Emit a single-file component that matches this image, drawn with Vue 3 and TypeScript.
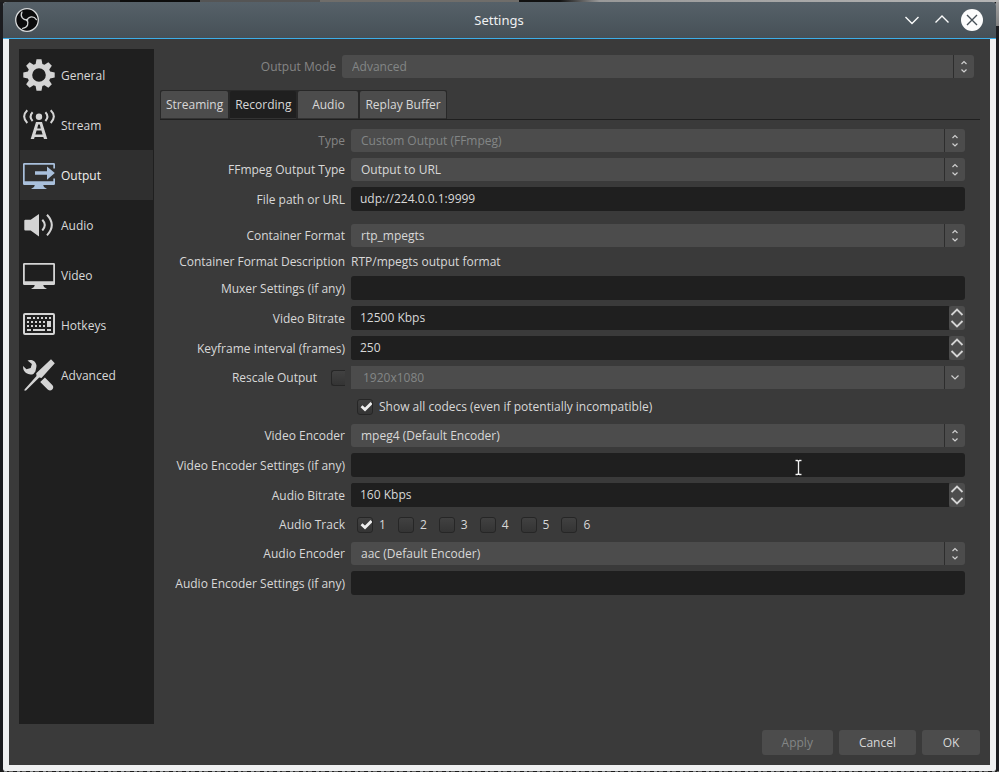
<script setup lang="ts">
import { ref, reactive } from 'vue'

type FieldKind = 'select' | 'text' | 'spin' | 'note' | 'combo' | 'codecs' | 'tracks'

interface Field {
  id: string
  label: string
  kind: FieldKind
  value: string
  disabled?: boolean
  roomy?: boolean
}

const sections = ['General', 'Stream', 'Output', 'Audio', 'Video', 'Hotkeys', 'Advanced']
const activeSection = ref('Output')

const tabs = ['Streaming', 'Recording', 'Audio', 'Replay Buffer']
const activeTab = ref('Recording')

const outputMode = ref('Advanced')
const rescale = ref(false)
const showAllCodecs = ref(true)
const tracks = reactive([true, false, false, false, false, false])

const fields = reactive<Field[]>([
  { id: 'type', label: 'Type', kind: 'select', value: 'Custom Output (FFmpeg)', disabled: true },
  { id: 'output-type', label: 'FFmpeg Output Type', kind: 'select', value: 'Output to URL' },
  { id: 'url', label: 'File path or URL', kind: 'text', value: 'udp://224.0.0.1:9999', roomy: true },
  { id: 'container', label: 'Container Format', kind: 'select', value: 'rtp_mpegts' },
  { id: 'container-desc', label: 'Container Format Description', kind: 'note', value: 'RTP/mpegts output format' },
  { id: 'muxer', label: 'Muxer Settings (if any)', kind: 'text', value: '' },
  { id: 'video-bitrate', label: 'Video Bitrate', kind: 'spin', value: '12500 Kbps' },
  { id: 'keyframe', label: 'Keyframe interval (frames)', kind: 'spin', value: '250' },
  { id: 'rescale', label: 'Rescale Output', kind: 'combo', value: '1920x1080', disabled: true },
  { id: 'codecs', label: '', kind: 'codecs', value: '' },
  { id: 'video-encoder', label: 'Video Encoder', kind: 'select', value: 'mpeg4 (Default Encoder)' },
  { id: 'video-settings', label: 'Video Encoder Settings (if any)', kind: 'text', value: '' },
  { id: 'audio-bitrate', label: 'Audio Bitrate', kind: 'spin', value: '160 Kbps' },
  { id: 'track', label: 'Audio Track', kind: 'tracks', value: '' },
  { id: 'audio-encoder', label: 'Audio Encoder', kind: 'select', value: 'aac (Default Encoder)' },
  { id: 'audio-settings', label: 'Audio Encoder Settings (if any)', kind: 'text', value: '' }
])

function step(field: Field, delta: number) {
  const amount = parseInt(field.value, 10) + delta
  field.value = field.value.replace(/^\d+/, String(Math.max(0, amount)))
}

// Eight-toothed gear outline, centred in a 32-unit box.
function gearPath(): string {
  const points: string[] = []
  const corners: [number, number][] = [[11.6, -17], [15.9, -9], [15.9, 9], [11.6, 17]]
  for (let tooth = 0; tooth < 8; tooth++) {
    for (const [radius, offset] of corners) {
      const angle = ((tooth * 45 + offset) * Math.PI) / 180
      points.push(`${(16 + radius * Math.cos(angle)).toFixed(2)} ${(16 + radius * Math.sin(angle)).toFixed(2)}`)
    }
  }
  return `M${points.join('L')}Z M16 9.2a6.8 6.8 0 1 0 0 13.6a6.8 6.8 0 1 0 0-13.6Z`
}
const gear = gearPath()
</script>

<template>
  <div class="desktop">
    <div class="window">
      <header class="titlebar">
        <svg class="logo" viewBox="-12 -12 24 24" aria-hidden="true">
          <circle r="11.3" fill="#0b0b0c" stroke="#d8dadb" stroke-width="1.3" />
          <g fill="none" stroke="#d0d2d3" stroke-width="1.3" stroke-linecap="round">
            <path d="M-.3 .6C1.5-3.6 6.5-4.6 9.4-.4" />
            <path d="M-.3 .6C1.5-3.6 6.5-4.6 9.4-.4" transform="rotate(120)" />
            <path d="M-.3 .6C1.5-3.6 6.5-4.6 9.4-.4" transform="rotate(240)" />
          </g>
        </svg>
        <h1>Settings</h1>
        <div class="window-buttons">
          <button type="button" aria-label="Minimize">
            <svg viewBox="0 0 22 22"><path d="M4.500 8l6.500 6.500L17.500 8" /></svg>
          </button>
          <button type="button" aria-label="Maximize">
            <svg viewBox="0 0 22 22"><path d="M4.500 13.500L11 7l6.500 6.500" /></svg>
          </button>
          <button type="button" aria-label="Close">
            <svg viewBox="0 0 22 22">
              <circle cx="11" cy="11" r="11" class="disc" />
              <path d="M6 6l10 10M16 6L6 16" class="cross" />
            </svg>
          </button>
        </div>
      </header>

      <div class="content">
        <div class="columns">
          <nav class="sidebar">
            <button
              v-for="name in sections"
              :key="name"
              type="button"
              :class="{ active: name === activeSection }"
              @click="activeSection = name"
            >
              <svg viewBox="0 0 32 32" aria-hidden="true">
                <path v-if="name === 'General'" :d="gear" fill-rule="evenodd" />
                <template v-else-if="name === 'Stream'">
                  <circle cx="16" cy="7.700" r="3.200" />
                  <g class="line">
                    <path d="M4.300 1.300Q-2 7.500 4.300 14M27.700 1.300Q34 7.500 27.700 14" />
                    <path d="M9.600 3.300Q5.600 7.600 9.600 12M22.400 3.300Q26.400 7.600 22.400 12" />
                  </g>
                  <path
                    fill-rule="evenodd"
                    d="M13 13h6l5.300 17h-3.300l-.7-2h-8.600l-.7 2H7.700ZM15.200 15.500l-1 4h3.600l-1-4ZM13.600 21.500l-1.200 4h7.200l-1.200-4Z"
                  />
                </template>
                <template v-else-if="name === 'Output'">
                  <path d="M1.300 4h29.400q1.300 0 1.300 1.300V9.500h-1.700V5.700H1.700v16.600h28.600V19.500H32v5.200q0 1.300-1.300 1.300H1.300Q0 26 0 24.700V5.300Q0 4 1.300 4Z" />
                  <path d="M12 12.200h12V7.600l7.800 6.500-7.800 6.600v-5H12ZM11.800 26h8.400l.8 2 3 1.900H8l3-1.900Z" />
                </template>
                <template v-else-if="name === 'Audio'">
                  <path d="M2.300 10.700h5.400L16 5v22.400l-8.300-6H2.300q-1 0-1-1v-8.700q0-1 1-1Z" />
                  <path class="line" d="M19.300 10.700q5 5.400 0 10.800M24 5.800q9.600 10.300 0 20.600" />
                </template>
                <path
                  v-else-if="name === 'Video'"
                  fill-rule="evenodd"
                  d="M1.300 4h29.400q1.300 0 1.300 1.300v19.400q0 1.300-1.300 1.300H20.200l.8 2 3 1.900H8l3-1.900.8-2H1.300Q0 26 0 24.700V5.300Q0 4 1.300 4ZM1.800 5.800v16.400h28.400V5.800Z"
                />
                <template v-else-if="name === 'Hotkeys'">
                  <rect x="1" y="5" width="30" height="20" rx="1" class="frame" />
                  <path
                    d="M4 8h4v2H4ZM10 8h2v2h-2ZM14 8h2v2h-2ZM18 8h2v2h-2ZM22 8h2v2h-2ZM26 8h2v2h-2ZM4 12h2v2H4ZM8 12h2v2H8ZM12 12h2v2h-2ZM16 12h2v2h-2ZM20 12h2v2h-2ZM24 12h4v6h-4ZM4 16h2v2H4ZM8 16h2v2H8ZM12 16h2v2h-2ZM16 16h2v2h-2ZM20 16h2v2h-2ZM4 20h4v2H4ZM10 20h12v2H10ZM24 20h4v2h-4Z"
                  />
                </template>
                <template v-else>
                  <path d="M28 .3l3.800 3.900L18.500 19l-2.300-.5L3 31.500 1.500 31.800 1.500 30.500 13.500 17l-.3-2.700Z" />
                  <path d="M4.500 1.600C8-.2 12.700 1.800 13.400 6c.2 1.500 0 2.500-.4 3.700l-.6 2.900-2 2.300C6.500 16.600 1.600 14.300.3 10L0 6.900l3.500 3.300 4.200-1.300 1.200-3.800ZM17.200 23l4.700-4.400 7.600 7.600c2.400 3-1.500 7-4.500 4.600Z" />
                </template>
              </svg>
              <span>{{ name }}</span>
            </button>
          </nav>

          <main class="panel">
            <div class="mode-row">
              <label for="output-mode" class="muted">Output Mode</label>
              <div class="select">
                <select id="output-mode" v-model="outputMode" disabled>
                  <option>Advanced</option>
                </select>
                <svg class="arrows" viewBox="0 0 20 23" aria-hidden="true">
                  <path d="M7.500 9L10 6.500 12.500 9M7.500 14.500L10 17l2.500-2.500" />
                </svg>
              </div>
            </div>

            <div class="tab-line">
              <div class="tabs" role="tablist">
                <button
                  v-for="tab in tabs"
                  :key="tab"
                  type="button"
                  role="tab"
                  :aria-selected="tab === activeTab"
                  :class="{ active: tab === activeTab }"
                  @click="activeTab = tab"
                >
                  {{ tab }}
                </button>
              </div>
            </div>

            <form class="form" @submit.prevent>
              <div v-for="field in fields" :key="field.id" class="row" :class="[`row-${field.kind}`, { roomy: field.roomy }]">
                <label v-if="field.kind === 'combo'" class="caption toggle">
                  {{ field.label }}
                  <input v-model="rescale" type="checkbox" class="check narrow" />
                </label>
                <span v-else-if="field.kind === 'note' || field.kind === 'tracks'" class="caption">{{ field.label }}</span>
                <span v-else-if="field.kind === 'codecs'" class="caption"></span>
                <label v-else :for="field.id" class="caption" :class="{ muted: field.disabled }">{{ field.label }}</label>

                <div v-if="field.kind === 'select' || field.kind === 'combo'" class="select">
                  <select :id="field.id" v-model="field.value" :disabled="field.disabled" :aria-label="field.label">
                    <option>{{ field.value }}</option>
                  </select>
                  <svg class="arrows" viewBox="0 0 20 23" aria-hidden="true">
                    <path v-if="field.kind === 'combo'" d="M6.500 9.500L10 13l3.500-3.500" />
                    <path v-else d="M7.500 9L10 6.500 12.500 9M7.500 14.500L10 17l2.500-2.500" />
                  </svg>
                </div>

                <input v-else-if="field.kind === 'text'" :id="field.id" v-model="field.value" type="text" class="text" />

                <div v-else-if="field.kind === 'spin'" class="spinner">
                  <input :id="field.id" v-model="field.value" type="text" class="text" />
                  <div class="steps">
                    <button type="button" aria-label="Increase" @click="step(field, 1)">
                      <svg viewBox="0 0 16 12"><path d="M2.500 9L8 3.500 13.500 9" /></svg>
                    </button>
                    <button type="button" aria-label="Decrease" @click="step(field, -1)">
                      <svg viewBox="0 0 16 12"><path d="M2.500 3L8 8.500 13.500 3" /></svg>
                    </button>
                  </div>
                </div>

                <span v-else-if="field.kind === 'note'">{{ field.value }}</span>

                <div v-else-if="field.kind === 'codecs'" class="checks">
                  <label>
                    <input v-model="showAllCodecs" type="checkbox" class="check" />
                    Show all codecs (even if potentially incompatible)
                  </label>
                </div>

                <div v-else class="checks">
                  <label v-for="(_, index) in tracks" :key="index">
                    <input v-model="tracks[index]" type="checkbox" class="check" />
                    {{ index + 1 }}
                  </label>
                </div>
              </div>
            </form>
          </main>
        </div>

        <footer class="actions">
          <button type="button" disabled>Apply</button>
          <button type="button">Cancel</button>
          <button type="button">OK</button>
        </footer>
      </div>
    </div>

    <svg class="pointer" viewBox="0 0 9 17" aria-hidden="true">
      <path class="halo" d="M1.500 1.500h2l1 1 1-1h2M4.500 2.500v12M1.500 15.500h2l1-1 1 1h2" />
      <path d="M1.500 1.500h2l1 1 1-1h2M4.500 2.500v12M1.500 15.500h2l1-1 1 1h2" />
    </svg>
  </div>
</template>

<style>
body {
  margin: 0;
  background: #1b1c1f;
}
</style>

<style scoped>
.desktop {
  position: relative;
  box-sizing: border-box;
  display: flex;
  min-height: 100vh;
  padding: 2px 3px 1px;
  background:
    linear-gradient(90deg, #222 0 12%, #0c0c0c 12% 20%, #555 20% 32%, #6f6d6a 32% 52%, #111 52% 56%, #999 60%, #b5b5b5) top / 100% 2px no-repeat,
    linear-gradient(#a2a2a2, #808080) right top / 3px 26px no-repeat,
    repeating-linear-gradient(90deg, #1a1a1a 0 4px, #85888a 4px 7px, #222 7px 9px, #666 9px 13px) bottom / 100% 1px no-repeat,
    #1b1c1f;
  font-family: "Open Sans", "Noto Sans", sans-serif;
  font-size: 12px;
  line-height: 17px;
  color: #d8d8d8;
}

button,
input,
select {
  margin: 0;
  font: inherit;
  color: inherit;
}

button {
  padding: 0;
  border: 0;
  background: none;
}

.window {
  flex: 1;
  display: flex;
  flex-direction: column;
  border-radius: 4px 4px 2px 2px;
  overflow: hidden;
  background: #eff0f1;
}

.titlebar {
  display: grid;
  grid-template-columns: 1fr auto 1fr;
  align-items: center;
  height: 36px;
  padding: 0 13px 0 12px;
  border-bottom: 1px solid #3daee9;
  background: linear-gradient(#566169, #465057);
  color: #eff0f1;
}

.titlebar h1 {
  margin: 0;
  font-family: "Noto Sans", sans-serif;
  font-size: 13px;
  font-weight: 400;
}

.logo {
  width: 24px;
  height: 24px;
}

.window-buttons {
  display: flex;
  justify-content: flex-end;
  gap: 8px;
}

.window-buttons svg {
  display: block;
  width: 22px;
  height: 22px;
  fill: none;
  stroke: #fcfcfc;
  stroke-width: 1.4;
}

.window-buttons .disc {
  fill: #fcfcfc;
  stroke: none;
}

.window-buttons .cross {
  stroke: #475057;
}

.content {
  flex: 1;
  display: flex;
  flex-direction: column;
  gap: 6px;
  margin: 0 6px 6px;
  padding: 10px;
  background: #3a3a3a;
}

.columns {
  flex: 1;
  display: flex;
  gap: 6px;
}

.sidebar {
  box-sizing: border-box;
  flex: none;
  display: flex;
  flex-direction: column;
  width: 135px;
  padding: 1px;
  background: #1f1f1f;
}

.sidebar button {
  display: flex;
  align-items: center;
  gap: 6px;
  height: 50px;
  padding: 0 3px;
}

.sidebar svg {
  width: 32px;
  height: 32px;
  fill: #d4d4d4;
}

.sidebar .line,
.sidebar .frame {
  fill: none;
  stroke: #d4d4d4;
  stroke-width: 2;
}

.sidebar .active {
  background: #2f2f2f;
  color: #f0f0f0;
}

.sidebar .active svg {
  fill: #a9c0dc;
}

.panel {
  flex: 1;
  min-width: 0;
  padding-top: 6px;
}

.mode-row {
  display: grid;
  grid-template-columns: 176px 1fr;
  column-gap: 6px;
  align-items: center;
  padding-right: 6px;
  margin-bottom: 12px;
}

.mode-row label {
  text-align: right;
}

.muted {
  color: #858585;
}

.tab-line {
  display: flex;
  border-bottom: 1px solid #1f1f1f;
}

.tabs {
  display: flex;
  gap: 2px;
  padding: 1px 1px 0;
  border-radius: 2px 2px 0 0;
  background: #282828;
}

.tabs button {
  box-sizing: border-box;
  min-width: 60px;
  height: 28px;
  padding: 0 5px;
  border-bottom: 1px solid #333;
  border-radius: 2px 2px 0 0;
  background: #4c4c4c;
}

.tabs .active {
  background: #1f1f1f;
}

.form {
  display: flex;
  flex-direction: column;
  gap: 6px;
  padding: 9px 15px 9px 0;
}

.row {
  display: grid;
  grid-template-columns: 185px 1fr;
  column-gap: 6px;
  align-items: center;
}

.roomy {
  padding-bottom: 7px;
}

.caption {
  text-align: right;
}

.row-text .caption,
.row-spin .caption {
  padding-top: 1px;
}

.toggle {
  display: flex;
  justify-content: flex-end;
  align-items: center;
  gap: 14px;
}

.select {
  position: relative;
  display: flex;
}

.select select {
  appearance: none;
  flex: 1;
  height: 23px;
  padding: 0 30px 0 10px;
  border: 0;
  border-radius: 3px;
  background: linear-gradient(90deg, transparent calc(100% - 21px), #2d2d2d 0 calc(100% - 20px), transparent 0) #4c4c4c;
}

.select select:disabled {
  opacity: 1;
  color: #838686;
}

.row-combo .select select {
  padding-left: 12px;
  border-radius: 0 3px 3px 0;
}

.arrows {
  position: absolute;
  top: 0;
  right: 0;
  width: 20px;
  height: 23px;
  fill: none;
  stroke: #cfcfcf;
  stroke-width: 1.2;
  pointer-events: none;
}

.text {
  box-sizing: border-box;
  width: 100%;
  height: 24px;
  padding: 0 9px 2px;
  border: 0;
  border-radius: 3px;
  background: #1f1f1f;
}

.spinner {
  display: flex;
  border-radius: 3px;
  background: linear-gradient(90deg, #1f1f1f calc(100% - 16px), transparent 0);
}

.spinner .text {
  flex: 1;
}

.steps {
  flex: none;
  display: flex;
  flex-direction: column;
  width: 16px;
  height: 24px;
  border-radius: 3px;
  background: #4c4c4c;
}

.steps svg {
  display: block;
  width: 16px;
  height: 12px;
  fill: none;
  stroke: #d4d4d4;
  stroke-width: 1.8;
}

.checks {
  display: flex;
  gap: 12px;
  height: 23px;
  padding-left: 6px;
}

.checks label {
  display: flex;
  align-items: center;
  gap: 6px;
}

.check {
  appearance: none;
  box-sizing: border-box;
  width: 16px;
  height: 16px;
  border: 1px solid #262626;
  border-radius: 3px;
  background: linear-gradient(#414141, #343434);
}

.check:checked {
  background:
    url("data:image/svg+xml,%3Csvg xmlns='http://www.w3.org/2000/svg' viewBox='0 0 14 14'%3E%3Cpath d='M3.500 6.200l3.500 3.300L13.500 3' fill='none' stroke='%23eee' stroke-width='2.800'/%3E%3C/svg%3E") center / 14px 14px no-repeat,
    linear-gradient(#414141, #343434);
}

.narrow {
  width: 14px;
  border-right: 0;
  border-radius: 3px 0 0 3px;
}

.actions {
  display: flex;
  justify-content: flex-end;
  gap: 6px;
}

.actions button {
  min-width: 58px;
  height: 25px;
  padding: 0 20px;
  border-radius: 3px;
  background: #4c4c4c;
}

.actions button:disabled {
  color: #838686;
}

.pointer {
  position: absolute;
  left: 794px;
  top: 459px;
  width: 9px;
  height: 17px;
  fill: none;
  stroke: #f4f4f4;
  stroke-width: 1.4;
}

.pointer .halo {
  stroke: #111;
  stroke-width: 3;
}
</style>
